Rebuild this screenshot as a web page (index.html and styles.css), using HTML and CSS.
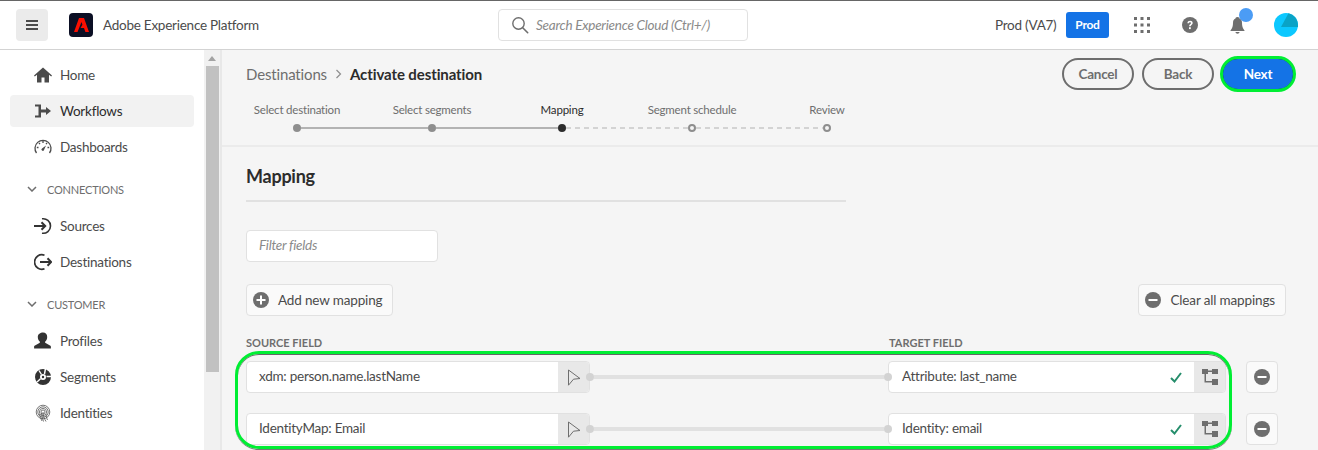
FILE: index.html
```html
<!DOCTYPE html>
<html>
<head>
	<title>Activate destination | Adobe Experience Platform</title>
	<meta charset="utf-8">
	<link rel="stylesheet" href="styles.css">
</head>

<body>

<header class="topbar">
	<button class="menu-btn">
		<svg width="14" height="12" viewBox="0 0 14 12"><path fill="#4b4b4b" d="M1 1h12v2H1zM1 5h12v2H1zM1 9h12v2H1z"/></svg>
	</button>
	<div class="logo">
		<svg width="15" height="14" viewBox="0 0 15 14"><path fill="#fa0f00" d="M5 0h5l5 14h-3.600L10 10H6.500L8.400 6.700l-.9-2.700L3.500 14H0z"/></svg>
	</div>
	<div class="app-name">Adobe Experience Platform</div>
	<div class="search">
		<svg width="18" height="18" viewBox="0 0 18 18"><circle cx="7.500" cy="7.500" r="5.700" fill="none" stroke="#6e6e6e" stroke-width="1.400"/><path d="M11.700 11.700l5 5" stroke="#6e6e6e" stroke-width="1.600" stroke-linecap="round"/></svg>
		<span>Search Experience Cloud (Ctrl+/)</span>
	</div>
	<div class="org">
		<span class="org-name">Prod (VA7)</span>
		<span class="org-badge">Prod</span>
	</div>
	<svg class="apps" width="16" height="16" viewBox="0 0 16 16"><path fill="#6e6e6e" d="M0 0h3v3H0zM6.500 0h3v3h-3zM13 0h3v3h-3zM0 6.500h3v3H0zM6.500 6.500h3v3h-3zM13 6.500h3v3h-3zM0 13h3v3H0zM6.500 13h3v3h-3zM13 13h3v3h-3z"/></svg>
	<svg class="help" width="16" height="16" viewBox="0 0 16 16"><circle cx="8" cy="8" r="8" fill="#6e6e6e"/><path d="M5.400 6.200C5.500 4.600 6.600 3.800 8.100 3.800c1.500 0 2.600.9 2.600 2.200 0 1.800-2 1.900-2 3.300H7.100c0-2.200 1.900-2.200 1.900-3.300 0-.5-.4-.8-.9-.8-.7 0-1 .4-1.100 1z" fill="#fff"/><rect x="7" y="10.200" width="1.800" height="1.900" fill="#fff"/></svg>
	<div class="bell">
		<svg width="15" height="18" viewBox="0 0 15 18"><path fill="#6e6e6e" d="M7.500 1C9 1 9.500 2 9.500 2.500 11.500 3.300 12 5 12 7c0 3 .6 5 2.500 7.500V15H.5v-.5C2.400 12 3 10 3 7c0-2 .5-3.700 2.500-4.500C5.500 2 6 1 7.500 1zM5.500 16h4c0 1-1 1.700-2 1.700s-2-.7-2-1.700z"/></svg>
		<span class="bell-dot"></span>
	</div>
	<svg class="avatar" width="24" height="24" viewBox="0 0 24 24"><circle cx="12" cy="12" r="12" fill="#0cc8ff"/><path d="M14.500.3A12 12 0 0 1 24 12v2H7z" fill="#0aa3c6"/></svg>
</header>

<div class="shell">
	<nav class="sidebar">
		<a class="nav-item">
			<svg width="18" height="18" viewBox="0 0 18 18"><path fill="#4b4b4b" d="M9 1.500L0 9.500l.8 1L3 8.800V16.500h4.500v-5h3v5H15V8.800l2.200 1.700.8-1z"/></svg>
			Home
		</a>
		<a class="nav-item active">
			<svg width="18" height="18" viewBox="0 0 18 18"><path fill="#4b4b4b" d="M1 2.500h6v5h5V5l5 4-5 4v-2.500H7v5H1v-2h3.500v-9H1z"/></svg>
			Workflows
		</a>
		<a class="nav-item">
			<svg width="18" height="18" viewBox="0 0 18 18"><path fill="none" stroke="#4b4b4b" stroke-width="1.300" d="M2.500 15A8 8 0 1 1 15.500 15"/><path stroke="#4b4b4b" stroke-width="1.300" d="M5 5l1 1.200M9 3v2M13 5l-1 1.200M2.800 9.500h1.700M13.500 9.500h1.700"/><path fill="#4b4b4b" d="M8 10.500l4-3-2 4.500a1.300 1.300 0 1 1-2-1.500z"/></svg>
			Dashboards
		</a>
		<div class="nav-group">
			<svg width="10" height="6" viewBox="0 0 10 6"><path fill="none" stroke="#6e6e6e" stroke-width="1.500" d="M1 1l4 4 4-4"/></svg>
			CONNECTIONS
		</div>
		<a class="nav-item">
			<svg width="18" height="18" viewBox="0 0 18 18"><path fill="none" stroke="#333" stroke-width="1.600" d="M8 1.800A7.300 7.300 0 1 1 8 16.200"/><path fill="none" stroke="#333" stroke-width="2" d="M0 9h11M7.500 5.300L11.200 9l-3.700 3.700"/></svg>
			Sources
		</a>
		<a class="nav-item">
			<svg width="18" height="18" viewBox="0 0 18 18"><path fill="none" stroke="#333" stroke-width="1.600" d="M10.500 2.200A7.300 7.300 0 1 0 10.500 15.800"/><path fill="none" stroke="#333" stroke-width="2" d="M6 9h11M13.500 5.300L17.200 9l-3.700 3.700"/></svg>
			Destinations
		</a>
		<div class="nav-group">
			<svg width="10" height="6" viewBox="0 0 10 6"><path fill="none" stroke="#6e6e6e" stroke-width="1.500" d="M1 1l4 4 4-4"/></svg>
			CUSTOMER
		</div>
		<a class="nav-item">
			<svg width="18" height="18" viewBox="0 0 18 18"><path fill="#333" d="M9 .5c2.600 0 4.200 1.800 4.200 4.400 0 2-.9 3.800-1.900 4.700-.4.400-.3 1.200.3 1.500l4.400 2.300c.7.300.9.800.9 1.600v1.500H.1V15c0-.8.200-1.300.9-1.600l4.400-2.300c.6-.3.700-1.100.3-1.500-1-.9-1.900-2.700-1.900-4.700C3.800 2.300 6.400.5 9 .5z"/></svg>
			Profiles
		</a>
		<a class="nav-item">
			<svg width="18" height="18" viewBox="0 0 18 18"><path fill="#333" fill-rule="evenodd" d="M9 1a8 8 0 1 1 0 16A8 8 0 0 1 9 1zm0 5a3 3 0 1 0 0 6 3 3 0 0 0 0-6z"/><circle cx="9" cy="9" r="1.200" fill="#333"/><path stroke="#fff" stroke-width="1.400" d="M11.500 .5L10.500 6M12.500 8.500H18M5 2.500L7.500 6.500M3 14l3.500-3.200"/></svg>
			Segments
		</a>
		<a class="nav-item">
			<svg width="18" height="18" viewBox="0 0 18 18"><g fill="none" stroke="#555" stroke-width=".8"><circle cx="9" cy="8" r="6.800"/><circle cx="9" cy="8" r="5.200"/><circle cx="9" cy="8" r="3.600"/><circle cx="9" cy="8" r="2"/><path d="M9 8c0 4 1.500 7 3 9.500M7.500 9c.2 3 1 6 2 8.500M5.500 10c.4 2.500 1.300 5 2.500 7M12 10c0 2 .6 4 1.500 6"/></g></svg>
			Identities
		</a>
	</nav>
	<div class="scrollbar">
		<span class="scroll-up"></span>
		<span class="scroll-thumb"></span>
	</div>

	<main class="content">
		<section class="wizard">
			<div class="wizard-head">
				<div class="crumbs">
					<span>Destinations</span>
					<svg width="7" height="10" viewBox="0 0 7 10"><path fill="none" stroke="#8e8e8e" stroke-width="1.200" d="M1.500 1l4 4-4 4"/></svg>
					<b>Activate destination</b>
				</div>
				<div class="actions">
					<button class="pill">Cancel</button>
					<button class="pill">Back</button>
					<button class="pill primary">Next</button>
				</div>
			</div>
			<div class="step-labels">
				<span class="step-label first">Select destination</span>
				<span class="step-label">Select segments</span>
				<span class="step-label narrow current">Mapping</span>
				<span class="step-label">Segment schedule</span>
				<span class="step-label last">Review</span>
			</div>
			<div class="step-track">
				<i class="dot done"></i><i class="line long"></i>
				<i class="dot done"></i><i class="line"></i>
				<i class="dot now"></i><i class="line dash"></i>
				<i class="dot todo"></i><i class="line dash long"></i>
				<i class="dot todo"></i>
			</div>
		</section>

		<section class="mapping">
			<h2>Mapping</h2>
			<div class="filter">Filter fields</div>
			<div class="tools">
				<button class="tool">
					<svg width="16" height="16" viewBox="0 0 16 16"><circle cx="8" cy="8" r="8" fill="#6e6e6e"/><path fill="#fff" d="M7 3.500h2V7h3.500v2H9v3.500H7V9H3.500V7H7z"/></svg>
					Add new mapping
				</button>
				<button class="tool">
					<svg width="16" height="16" viewBox="0 0 16 16"><circle cx="8" cy="8" r="8" fill="#6e6e6e"/><rect x="3.500" y="7" width="9" height="2" fill="#fff"/></svg>
					Clear all mappings
				</button>
			</div>
			<div class="col-heads">
				<span class="col-source">SOURCE FIELD</span>
				<span>TARGET FIELD</span>
			</div>
			<div class="rows">
				<div class="row">
					<div class="field source">
						<span class="field-text">xdm: person.name.lastName</span>
						<span class="field-btn"><svg width="14" height="17" viewBox="0 0 14 17"><path fill="none" stroke="#6e6e6e" d="M1.500 1l11.500 8.500-6.500.7-5 6z"/></svg></span>
					</div>
					<div class="link"><i></i><b></b><i></i></div>
					<div class="field target">
						<span class="field-text">Attribute: last_name</span>
						<svg class="check" width="12" height="11" viewBox="0 0 12 11"><path fill="none" stroke="#268e6c" stroke-width="2" d="M1 6l3.500 3.500L11 1"/></svg>
						<span class="field-btn"><svg width="16" height="16" viewBox="0 0 16 16"><path fill="#6e6e6e" d="M0 0h6v5H4v7h6v-2h6v6h-6v-2.500H2.500V5H0zM10 0h6v5h-6V3H6V1.500h4z"/></svg></span>
					</div>
					<button class="remove"><svg width="16" height="16" viewBox="0 0 16 16"><circle cx="8" cy="8" r="8" fill="#6e6e6e"/><rect x="3.500" y="7" width="9" height="2" fill="#fff"/></svg></button>
				</div>
				<div class="row">
					<div class="field source">
						<span class="field-text">IdentityMap: Email</span>
						<span class="field-btn"><svg width="14" height="17" viewBox="0 0 14 17"><path fill="none" stroke="#6e6e6e" d="M1.500 1l11.500 8.500-6.500.7-5 6z"/></svg></span>
					</div>
					<div class="link"><i></i><b></b><i></i></div>
					<div class="field target">
						<span class="field-text">Identity: email</span>
						<svg class="check" width="12" height="11" viewBox="0 0 12 11"><path fill="none" stroke="#268e6c" stroke-width="2" d="M1 6l3.500 3.500L11 1"/></svg>
						<span class="field-btn"><svg width="16" height="16" viewBox="0 0 16 16"><path fill="#6e6e6e" d="M0 0h6v5H4v7h6v-2h6v6h-6v-2.500H2.500V5H0zM10 0h6v5h-6V3H6V1.500h4z"/></svg></span>
					</div>
					<button class="remove"><svg width="16" height="16" viewBox="0 0 16 16"><circle cx="8" cy="8" r="8" fill="#6e6e6e"/><rect x="3.500" y="7" width="9" height="2" fill="#fff"/></svg></button>
				</div>
				<div class="highlight"></div>
			</div>
		</section>
	</main>
</div>

</body>
</html>
```

FILE: styles.css
```css
html, body {
	height: 450px;
	margin: 0;
	overflow: hidden;
}
body {
	font-family: Lato, "Open Sans", sans-serif;
	font-size: 13.5px;
	letter-spacing: -.25px;
	color: #4b4b4b;
	background: #f5f5f5;
}
button {
	font: inherit;
	letter-spacing: inherit;
	color: inherit;
	cursor: pointer;
}

/* top bar */
.topbar {
	display: flex;
	align-items: center;
	box-sizing: border-box;
	height: 50px;
	padding-left: 16px;
	background: #fff;
	border-top: 1px solid #666;
	border-bottom: 1px solid #d3d3d3;
}
.menu-btn {
	display: flex;
	align-items: center;
	justify-content: center;
	width: 32px;
	height: 32px;
	padding: 0;
	background: #ebebeb;
	border: 0;
	border-radius: 4px;
}
.logo {
	display: flex;
	align-items: center;
	justify-content: center;
	width: 24px;
	height: 24px;
	margin-left: 21px;
	background: #0b0f24;
	border-radius: 4px;
}
.app-name {
	width: 395px;
	margin-left: 10px;
}
.search {
	display: flex;
	align-items: center;
	gap: 7px;
	box-sizing: border-box;
	width: 250px;
	height: 32px;
	padding-left: 12px;
	color: #8a8a8a;
	font-style: italic;
	background: #fff;
	border: 1px solid #e1e1e1;
	border-radius: 4px;
}
.org {
	display: flex;
	align-items: center;
	gap: 10px;
	margin-left: 247px;
}
.org-name {
	width: 61px;
	white-space: nowrap;
}
.org-badge {
	width: 43px;
	height: 26px;
	font-size: 12px;
	font-weight: 700;
	line-height: 26px;
	text-align: center;
	color: #fff;
	background: #1473e6;
	border-radius: 3px;
}
.apps {
	margin-left: 25px;
}
.help {
	margin-left: 32px;
}
.bell {
	position: relative;
	display: flex;
	margin-left: 32px;
}
.bell-dot {
	position: absolute;
	top: -8px;
	left: 9px;
	width: 14px;
	height: 14px;
	background: #4b9cf5;
	border-radius: 50%;
}
.avatar {
	margin-left: 29px;
}

/* left navigation */
.shell {
	display: flex;
	height: 400px;
}
.sidebar {
	box-sizing: border-box;
	flex: none;
	width: 204px;
	padding: 9px 10px 0;
	background: #fff;
}
.nav-item {
	display: flex;
	align-items: center;
	gap: 8px;
	height: 32px;
	margin-bottom: 4px;
	padding-left: 24px;
	border-radius: 4px;
}
.nav-item.active {
	color: #2c2c2c;
	background: #f2f2f2;
}
.nav-group {
	display: flex;
	align-items: center;
	gap: 10px;
	height: 22px;
	margin: 15px 0 10px;
	padding-left: 17px;
	font-size: 11px;
	letter-spacing: -.2px;
	color: #6e6e6e;
}
.scrollbar {
	flex: none;
	display: flex;
	flex-direction: column;
	align-items: center;
	width: 16px;
	background: #f1f1f1;
	border-right: 2px solid #e8e8e8;
}
.scroll-up {
	width: 0;
	height: 0;
	margin: 6px 0 5px;
	border: 4px solid transparent;
	border-top: 0;
	border-bottom: 5px solid #a3a3a3;
}
.scroll-thumb {
	width: 13px;
	height: 306px;
	background: #c1c1c1;
}

/* wizard header */
.content {
	flex: 1;
}
.wizard {
	box-sizing: border-box;
	height: 97px;
	padding: 8px 24px 0;
	border-bottom: 2px solid #ebebeb;
}
.wizard-head {
	display: flex;
	align-items: center;
	justify-content: space-between;
}
.crumbs {
	display: flex;
	align-items: center;
	gap: 8px;
	font-size: 15px;
	letter-spacing: -.15px;
	color: #6e6e6e;
}
.crumbs b {
	letter-spacing: -.1px;
	color: #2c2c2c;
}
.actions {
	display: flex;
	gap: 8px;
}
.pill {
	box-sizing: border-box;
	width: 72px;
	height: 32px;
	padding: 0;
	font-weight: 700;
	color: #6e6e6e;
	background: transparent;
	border: 2px solid #6e6e6e;
	border-radius: 16px;
}
.pill.primary {
	color: #fff;
	background: #1473e6;
	border: 1px solid #0d3f80;
	outline: 3px solid #0e3;
	outline-offset: -1px;
}
.step-labels {
	display: flex;
	margin: 12px 0 0 -14px;
	font-size: 11.5px;
	letter-spacing: -.2px;
	color: #6e6e6e;
	line-height: 16px;
}
.step-label {
	width: 140px;
	text-align: center;
	white-space: nowrap;
}
.step-label.first, .step-label.last {
	width: 130px;
}
.step-label.narrow {
	width: 120px;
}
.step-label.current {
	color: #2c2c2c;
}
.step-track {
	display: flex;
	align-items: center;
	margin: 6px 0 0 47px;
}
.dot {
	flex: none;
	box-sizing: border-box;
	width: 8px;
	height: 8px;
	border-radius: 50%;
}
.dot.done {
	background: #8e8e8e;
}
.dot.now {
	background: #2c2c2c;
}
.dot.todo {
	background: #f5f5f5;
	border: 2px solid #8e8e8e;
}
.line {
	flex: none;
	width: 122px;
	height: 2px;
	background: #b3b3b3;
}
.line.long {
	width: 127px;
}
.line.dash {
	background: repeating-linear-gradient(90deg, #d3d3d3 0 5px, transparent 5px 9px);
}

/* mapping section */
.mapping {
	padding: 0 24px;
}
h2 {
	box-sizing: border-box;
	width: 600px;
	height: 55px;
	margin: 0;
	padding-top: 17px;
	font-size: 18px;
	font-weight: 700;
	line-height: 24px;
	color: #2c2c2c;
	border-bottom: 2px solid #e1e1e1;
}
.filter {
	box-sizing: border-box;
	width: 192px;
	height: 32px;
	margin-top: 28px;
	padding-left: 12px;
	font-style: italic;
	line-height: 28px;
	color: #8a8a8a;
	background: #fff;
	border: 1px solid #e1e1e1;
	border-radius: 4px;
}
.tools {
	display: flex;
	justify-content: space-between;
	width: 1040px;
	margin-top: 22px;
}
.tool {
	display: flex;
	align-items: center;
	gap: 9px;
	height: 32px;
	padding: 0 10px 0 6px;
	letter-spacing: -.15px;
	background: #fafafa;
	border: 1px solid #e1e1e1;
	border-radius: 4px;
}
.col-heads {
	display: flex;
	margin-top: 20px;
	font-size: 11px;
	font-weight: 700;
	line-height: 14px;
	letter-spacing: 0;
	color: #6e6e6e;
}
.col-source {
	width: 643px;
}
.rows {
	position: relative;
	margin-top: 4px;
	padding-top: 7px;
}
.row {
	display: flex;
	align-items: center;
	margin-bottom: 20px;
}
.field {
	display: flex;
	align-items: center;
	box-sizing: border-box;
	flex: none;
	height: 32px;
	background: #fff;
	border: 1px solid #e1e1e1;
	border-radius: 4px;
	overflow: hidden;
}
.source {
	width: 344px;
}
.target {
	width: 338px;
}
.field-text {
	flex: 1;
	padding: 0 0 2px 12px;
}
.target .field-text {
	padding-left: 13px;
}
.field-btn {
	display: flex;
	align-items: center;
	justify-content: center;
	width: 31px;
	height: 100%;
	background: #e8e8e8;
}
.check {
	margin-right: 12px;
}
.link {
	display: flex;
	flex: none;
	align-items: center;
	width: 306px;
	margin: 0 -4px;
	position: relative;
}
.link i {
	flex: none;
	width: 8px;
	height: 8px;
	background: #d3d3d3;
	border-radius: 50%;
}
.link b {
	flex: 1;
	height: 4px;
	background: #e1e1e1;
}
.remove {
	display: flex;
	align-items: center;
	justify-content: center;
	box-sizing: border-box;
	flex: none;
	width: 32px;
	height: 32px;
	margin-left: 20px;
	padding: 0;
	background: #fafafa;
	border: 1px solid #e1e1e1;
	border-radius: 4px;
}
.highlight {
	position: absolute;
	top: -3px;
	left: -11px;
	box-sizing: border-box;
	width: 997px;
	height: 98px;
	border: 3px solid #0e3;
	border-radius: 24px;
	box-shadow: inset 0 1px 0 #666, 0 1px 0 #777;
	pointer-events: none;
}
```
